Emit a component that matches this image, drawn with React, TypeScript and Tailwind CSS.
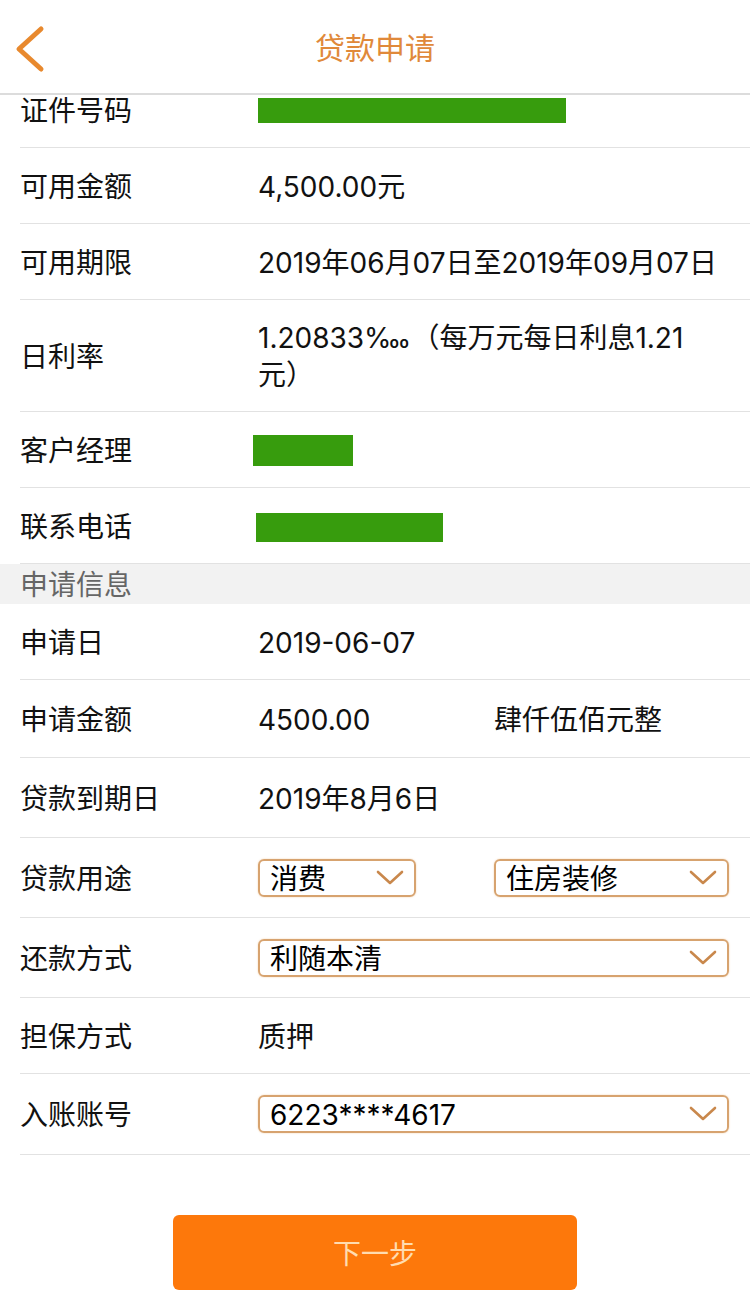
import React from "react";

const FONT = { fontFamily: 'Inter, "Noto Sans CJK SC", "Noto Sans", sans-serif' };

function Chevron() {
  return (
    <svg width="28" height="16" viewBox="0 0 28 16" className="shrink-0">
      <polyline points="2,2 14,13 26,2" fill="none" stroke="#c9884c" strokeWidth="2.6" strokeLinecap="round" strokeLinejoin="round" />
    </svg>
  );
}

function Select({ text, className }: { text: string; className: string }) {
  return (
    <div className={`flex h-[38px] items-center justify-between rounded-[6px] border-2 border-[#d7a36f] pl-[10px] pr-[10px] shadow-[0_0_2px_#f3d2ad] ${className}`}>
      <span className="pt-[2px] text-[28px] leading-[34px] text-black">{text}</span>
      <Chevron />
    </div>
  );
}

function Row({ label, h, children }: { label: string; h: string; children?: React.ReactNode }) {
  return (
    <div className={`ml-[20px] flex items-center border-b-[1.5px] border-[#e2e2e2] ${h}`}>
      <div className="w-[238px] shrink-0 pt-[3px] text-[28px] leading-[37px] text-[#111]">{label}</div>
      <div className="flex flex-1 items-center text-[28px] leading-[37px] text-[#111]">{children}</div>
    </div>
  );
}

function T({ children }: { children: React.ReactNode }) {
  return <span className="pt-[3px]">{children}</span>;
}

export default function App() {
  return (
    <div className="w-[750px] h-[1299px] overflow-hidden bg-white" style={FONT}>
      {/* Header */}
      <div className="relative flex h-[95px] items-center justify-center border-b-2 border-[#dcdcdc]">
        <svg width="40" height="50" viewBox="0 0 40 50" className="absolute left-[10px] top-[24px]">
          <polyline points="31,5 9,25 31,45" fill="none" stroke="#e8892e" strokeWidth="5" strokeLinecap="round" strokeLinejoin="round" />
        </svg>
        <span className="mt-[2px] text-[30px] leading-[40px] text-[#e0893a]">贷款申请</span>
      </div>

      {/* 证件号码 (partially scrolled) */}
      <div className="ml-[20px] flex h-[53px] items-start border-b-[1.5px] border-[#e2e2e2]">
        <div className="-mt-[2px] w-[238px] shrink-0 text-[28px] leading-[37px] text-[#111]">证件号码</div>
        <div className="mt-[3px] h-[25px] w-[308px] bg-[#379c0d]" />
      </div>

      <Row label="可用金额" h="h-[76px]"><T>4,500.00元</T></Row>
      <Row label="可用期限" h="h-[76px]"><T>2019年06月07日至2019年09月07日</T></Row>
      <Row label="日利率" h="h-[112px]">
        <span className="block pt-[3px]">
          1.20833‱（每万元每日利息1.21
          <br />
          元）
        </span>
      </Row>
      <Row label="客户经理" h="h-[76px]">
        <div className="-ml-[5px] mt-[2px] h-[31px] w-[100px] bg-[#379c0d]" />
      </Row>
      <Row label="联系电话" h="h-[76px]">
        <div className="-ml-[2px] mt-[3px] h-[29px] w-[187px] bg-[#379c0d]" />
      </Row>

      {/* Section header */}
      <div className="flex h-[40px] items-center bg-[#f2f2f2] pl-[20px] pt-[3px] text-[28px] leading-[37px] text-[#666]">申请信息</div>

      <Row label="申请日" h="h-[76px]"><T>2019-06-07</T></Row>
      <Row label="申请金额" h="h-[78px]">
        <span className="w-[236px] pt-[3px]">4500.00</span>
        <span className="pt-[3px]">肆仟伍佰元整</span>
      </Row>
      <Row label="贷款到期日" h="h-[80px]"><T>2019年8月6日</T></Row>
      <Row label="贷款用途" h="h-[80px]">
        <Select text="消费" className="w-[158px]" />
        <Select text="住房装修" className="ml-[78px] w-[235px]" />
      </Row>
      <Row label="还款方式" h="h-[80px]">
        <Select text="利随本清" className="w-[471px]" />
      </Row>
      <Row label="担保方式" h="h-[76px]"><T>质押</T></Row>
      <Row label="入账账号" h="h-[81px]">
        <Select text="6223****4617" className="w-[471px]" />
      </Row>

      {/* Button */}
      <div className="mt-[60px] flex justify-center">
        <button className="flex h-[75px] w-[404px] items-center justify-center rounded-[6px] bg-[#fd780b] pt-[2px] text-[28px] text-[#ffdcb0]">
          下一步
        </button>
      </div>
    </div>
  );
}
